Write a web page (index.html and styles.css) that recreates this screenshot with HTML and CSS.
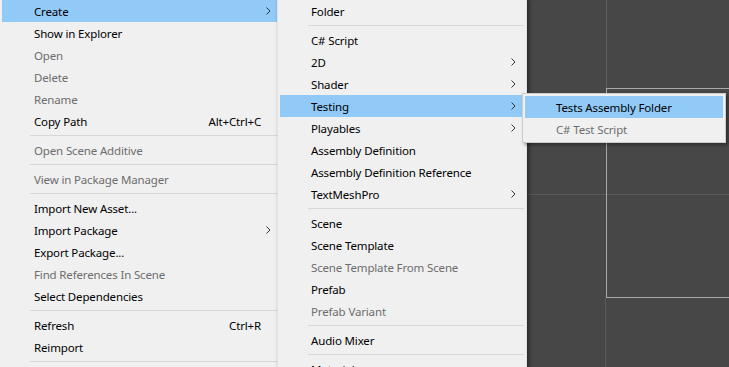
FILE: index.html
```html
<!DOCTYPE html>
<html lang="en">
<head>
    <meta charset="UTF-8">
    <title>Project Context Menu</title>
    <link rel="stylesheet" href="styles.css">
</head>
<body>

    <div class="editor">
        <div class="pane pane-top"></div>
        <div class="pane pane-mid"></div>
        <div class="pane scene-view"></div>
        <div class="ruler"></div>
        <div class="pane pane-bottom"></div>
    </div>

    <div class="menu menu-main">
        <div class="item active"><span class="label">Create</span><span class="arrow"><svg viewBox="0 0 5 8"><polyline points="0.5,0.5 4,4 0.5,7.5"/></svg></span></div>
        <div class="item"><span class="label">Show in Explorer</span><span class="arrow"></span></div>
        <div class="item disabled"><span class="label">Open</span><span class="arrow"></span></div>
        <div class="item disabled"><span class="label">Delete</span><span class="arrow"></span></div>
        <div class="item disabled"><span class="label">Rename</span><span class="arrow"></span></div>
        <div class="item"><span class="label">Copy Path</span><span class="shortcut">Alt+Ctrl+C</span><span class="arrow"></span></div>
        <div class="sep"></div>
        <div class="item disabled"><span class="label">Open Scene Additive</span><span class="arrow"></span></div>
        <div class="sep"></div>
        <div class="item disabled"><span class="label">View in Package Manager</span><span class="arrow"></span></div>
        <div class="sep"></div>
        <div class="item"><span class="label">Import New Asset...</span><span class="arrow"></span></div>
        <div class="item"><span class="label">Import Package</span><span class="arrow"><svg viewBox="0 0 5 8"><polyline points="0.5,0.5 4,4 0.5,7.5"/></svg></span></div>
        <div class="item"><span class="label">Export Package...</span><span class="arrow"></span></div>
        <div class="item disabled"><span class="label">Find References In Scene</span><span class="arrow"></span></div>
        <div class="item"><span class="label">Select Dependencies</span><span class="arrow"></span></div>
        <div class="sep"></div>
        <div class="item"><span class="label">Refresh</span><span class="shortcut">Ctrl+R</span><span class="arrow"></span></div>
        <div class="item"><span class="label">Reimport</span><span class="arrow"></span></div>
        <div class="sep"></div>
    </div>

    <div class="menu menu-create">
        <div class="item"><span class="label">Folder</span><span class="arrow"></span></div>
        <div class="sep"></div>
        <div class="item"><span class="label">C# Script</span><span class="arrow"></span></div>
        <div class="item"><span class="label">2D</span><span class="arrow"><svg viewBox="0 0 5 8"><polyline points="0.5,0.5 4,4 0.5,7.5"/></svg></span></div>
        <div class="item"><span class="label">Shader</span><span class="arrow"><svg viewBox="0 0 5 8"><polyline points="0.5,0.5 4,4 0.5,7.5"/></svg></span></div>
        <div class="item active"><span class="label">Testing</span><span class="arrow"><svg viewBox="0 0 5 8"><polyline points="0.5,0.5 4,4 0.5,7.5"/></svg></span></div>
        <div class="item"><span class="label">Playables</span><span class="arrow"><svg viewBox="0 0 5 8"><polyline points="0.5,0.5 4,4 0.5,7.5"/></svg></span></div>
        <div class="item"><span class="label">Assembly Definition</span><span class="arrow"></span></div>
        <div class="item"><span class="label">Assembly Definition Reference</span><span class="arrow"></span></div>
        <div class="item"><span class="label">TextMeshPro</span><span class="arrow"><svg viewBox="0 0 5 8"><polyline points="0.5,0.5 4,4 0.5,7.5"/></svg></span></div>
        <div class="sep"></div>
        <div class="item"><span class="label">Scene</span><span class="arrow"></span></div>
        <div class="item"><span class="label">Scene Template</span><span class="arrow"></span></div>
        <div class="item disabled"><span class="label">Scene Template From Scene</span><span class="arrow"></span></div>
        <div class="item"><span class="label">Prefab</span><span class="arrow"></span></div>
        <div class="item disabled"><span class="label">Prefab Variant</span><span class="arrow"></span></div>
        <div class="sep"></div>
        <div class="item"><span class="label">Audio Mixer</span><span class="arrow"></span></div>
        <div class="sep"></div>
        <div class="item"><span class="label">Material</span><span class="arrow"></span></div>
    </div>

    <div class="menu menu-testing">
        <div class="item active"><span class="label">Tests Assembly Folder</span><span class="arrow"></span></div>
        <div class="item disabled"><span class="label">C# Test Script</span><span class="arrow"></span></div>
    </div>

</body>
</html>
```

FILE: styles.css
```css
html, body {
    margin: 0;
    padding: 0;
    overflow: hidden;
}
body {
    font-family: "Noto Sans", "Open Sans", sans-serif;
    font-size: 11.5px;
    letter-spacing: -0.15px;
    background-color: #474747;
    width: 729px;
    height: 367px;
    position: relative;
}

/* editor panes behind the menus */
.editor {
    display: grid;
    grid-template-columns: 607px 1fr;
    grid-template-rows: 89px 209px 1fr;
    height: 367px;
}
.pane-top {
    grid-column: 1;
    grid-row: 1;
    border-right: 1px solid #5f5f5f;
}
.pane-mid {
    grid-column: 1;
    grid-row: 2;
}
.scene-view {
    grid-column: 2;
    grid-row: 2;
    border: 1px solid #a9a9a9;
    border-right: none;
    margin-left: -1px;
    margin-top: -1px;
}
.pane-bottom {
    grid-column: 1;
    grid-row: 3;
    border-right: 1px solid #5a5a5a;
    margin-right: 1px;
}
.ruler {
    grid-column: 1 / 3;
    grid-row: 2;
    align-self: start;
    height: 1px;
    margin-top: 105px;
    background: rgba(255, 255, 255, 0.1);
}

/* context menus */
.menu {
    position: absolute;
    background-color: #f0f0f0;
    border: 1px solid #cccccc;
    padding: 2px;
    box-sizing: border-box;
}
.menu-main {
    left: -1px;
    top: -3px;
    width: 281px;
    border-color: #f0f0f0;
}
.menu-create {
    left: 277px;
    top: -3px;
    width: 250px;
    border-color: #e2e2e2;
    box-shadow: 2px 2px 4px rgba(0, 0, 0, 0.45);
}
.menu-testing {
    left: 522px;
    top: 93px;
    width: 204px;
    box-shadow: 2px 2px 3px rgba(0, 0, 0, 0.35);
}
.item {
    display: flex;
    align-items: center;
    height: 22px;
    padding-left: 31px;
    color: #000000;
    white-space: nowrap;
}
.menu-main .item {
    padding-left: 32px;
}
.item.active {
    background-color: #91c9f7;
}
.item.disabled {
    color: #6d6d6d;
}
.label {
    flex: 1;
}
.shortcut {
    padding-right: 1px;
}
.arrow {
    width: 15px;
    display: flex;
    align-items: center;
    padding-left: 4px;
    box-sizing: border-box;
}
.arrow svg {
    width: 5px;
    height: 8px;
    fill: none;
    stroke: #333333;
    stroke-width: 1;
}
.menu-create .arrow {
    width: 17px;
    padding-left: 4px;
}
.sep {
    height: 7px;
    margin-left: 28px;
    display: flex;
    align-items: center;
}
.sep::after {
    content: "";
    flex: 1;
    height: 1px;
    background-color: #d7d7d7;
}
```
